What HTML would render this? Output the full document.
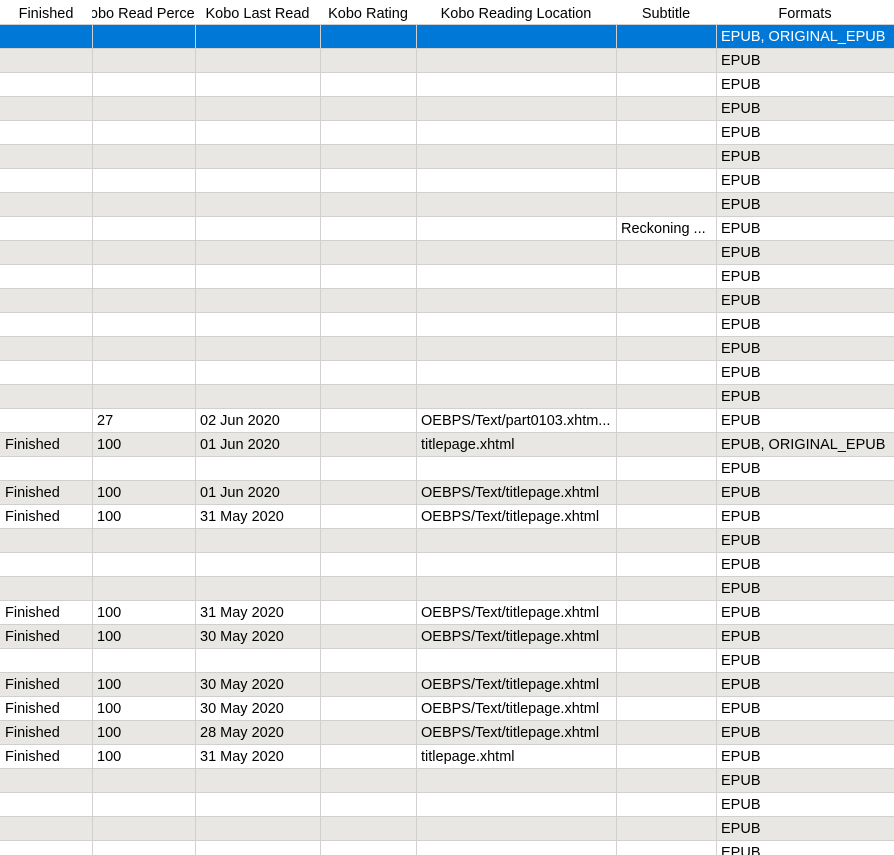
<!DOCTYPE html>
<html><head><meta charset="utf-8"><style>
html,body{margin:0;padding:0;width:894px;height:856px;overflow:hidden;background:#fff;font-family:"Liberation Sans",sans-serif;font-size:14.5px;color:#000}
.r{position:absolute;left:0;width:894px;height:24px;}
.c{position:absolute;top:0;height:23px;line-height:24px;border-right:1px solid #d0d0d0;border-bottom:1px solid #d0d0d0;padding-left:5px;box-sizing:content-box;white-space:nowrap;overflow:hidden}
.g{background:#e8e7e3}
.s{background:#0078d7;color:#fff}
.h .c{background:#fff;text-align:center;padding-left:0;display:flex;justify-content:center;border-bottom:1px solid #d0d0d0;border-right:1px solid #d8d8d8;height:24px;line-height:28px}
.c0{left:0;width:87px}.c1{left:92px;width:98px}.c2{left:195px;width:120px}.c3{left:320px;width:91px}.c4{left:416px;width:195px}.c5{left:616px;width:95px}.c6{left:716px;width:178px;border-right:none}
.h .c0{width:92px}.h .c1{width:103px}.h .c2{width:125px}.h .c3{width:96px}.h .c4{width:200px}.h .c5{width:100px}.h .c6{width:178px}
</style></head><body>
<div class="r h" style="top:0;height:25px">
<div class="c c0">Finished</div><div class="c c1"><span>Kobo Read Percent</span></div><div class="c c2">Kobo Last Read</div><div class="c c3">Kobo Rating</div><div class="c c4">Kobo Reading Location</div><div class="c c5">Subtitle</div><div class="c c6">Formats</div>
</div>
<div class="r s" style="top:25px"><div class="c c0"></div><div class="c c1"></div><div class="c c2"></div><div class="c c3"></div><div class="c c4"></div><div class="c c5"></div><div class="c c6">EPUB, ORIGINAL_EPUB</div></div>
<div class="r g" style="top:49px"><div class="c c0"></div><div class="c c1"></div><div class="c c2"></div><div class="c c3"></div><div class="c c4"></div><div class="c c5"></div><div class="c c6">EPUB</div></div>
<div class="r" style="top:73px"><div class="c c0"></div><div class="c c1"></div><div class="c c2"></div><div class="c c3"></div><div class="c c4"></div><div class="c c5"></div><div class="c c6">EPUB</div></div>
<div class="r g" style="top:97px"><div class="c c0"></div><div class="c c1"></div><div class="c c2"></div><div class="c c3"></div><div class="c c4"></div><div class="c c5"></div><div class="c c6">EPUB</div></div>
<div class="r" style="top:121px"><div class="c c0"></div><div class="c c1"></div><div class="c c2"></div><div class="c c3"></div><div class="c c4"></div><div class="c c5"></div><div class="c c6">EPUB</div></div>
<div class="r g" style="top:145px"><div class="c c0"></div><div class="c c1"></div><div class="c c2"></div><div class="c c3"></div><div class="c c4"></div><div class="c c5"></div><div class="c c6">EPUB</div></div>
<div class="r" style="top:169px"><div class="c c0"></div><div class="c c1"></div><div class="c c2"></div><div class="c c3"></div><div class="c c4"></div><div class="c c5"></div><div class="c c6">EPUB</div></div>
<div class="r g" style="top:193px"><div class="c c0"></div><div class="c c1"></div><div class="c c2"></div><div class="c c3"></div><div class="c c4"></div><div class="c c5"></div><div class="c c6">EPUB</div></div>
<div class="r" style="top:217px"><div class="c c0"></div><div class="c c1"></div><div class="c c2"></div><div class="c c3"></div><div class="c c4"></div><div class="c c5">Reckoning ...</div><div class="c c6">EPUB</div></div>
<div class="r g" style="top:241px"><div class="c c0"></div><div class="c c1"></div><div class="c c2"></div><div class="c c3"></div><div class="c c4"></div><div class="c c5"></div><div class="c c6">EPUB</div></div>
<div class="r" style="top:265px"><div class="c c0"></div><div class="c c1"></div><div class="c c2"></div><div class="c c3"></div><div class="c c4"></div><div class="c c5"></div><div class="c c6">EPUB</div></div>
<div class="r g" style="top:289px"><div class="c c0"></div><div class="c c1"></div><div class="c c2"></div><div class="c c3"></div><div class="c c4"></div><div class="c c5"></div><div class="c c6">EPUB</div></div>
<div class="r" style="top:313px"><div class="c c0"></div><div class="c c1"></div><div class="c c2"></div><div class="c c3"></div><div class="c c4"></div><div class="c c5"></div><div class="c c6">EPUB</div></div>
<div class="r g" style="top:337px"><div class="c c0"></div><div class="c c1"></div><div class="c c2"></div><div class="c c3"></div><div class="c c4"></div><div class="c c5"></div><div class="c c6">EPUB</div></div>
<div class="r" style="top:361px"><div class="c c0"></div><div class="c c1"></div><div class="c c2"></div><div class="c c3"></div><div class="c c4"></div><div class="c c5"></div><div class="c c6">EPUB</div></div>
<div class="r g" style="top:385px"><div class="c c0"></div><div class="c c1"></div><div class="c c2"></div><div class="c c3"></div><div class="c c4"></div><div class="c c5"></div><div class="c c6">EPUB</div></div>
<div class="r" style="top:409px"><div class="c c0"></div><div class="c c1">27</div><div class="c c2">02 Jun 2020</div><div class="c c3"></div><div class="c c4">OEBPS/Text/part0103.xhtm...</div><div class="c c5"></div><div class="c c6">EPUB</div></div>
<div class="r g" style="top:433px"><div class="c c0">Finished</div><div class="c c1">100</div><div class="c c2">01 Jun 2020</div><div class="c c3"></div><div class="c c4">titlepage.xhtml</div><div class="c c5"></div><div class="c c6">EPUB, ORIGINAL_EPUB</div></div>
<div class="r" style="top:457px"><div class="c c0"></div><div class="c c1"></div><div class="c c2"></div><div class="c c3"></div><div class="c c4"></div><div class="c c5"></div><div class="c c6">EPUB</div></div>
<div class="r g" style="top:481px"><div class="c c0">Finished</div><div class="c c1">100</div><div class="c c2">01 Jun 2020</div><div class="c c3"></div><div class="c c4">OEBPS/Text/titlepage.xhtml</div><div class="c c5"></div><div class="c c6">EPUB</div></div>
<div class="r" style="top:505px"><div class="c c0">Finished</div><div class="c c1">100</div><div class="c c2">31 May 2020</div><div class="c c3"></div><div class="c c4">OEBPS/Text/titlepage.xhtml</div><div class="c c5"></div><div class="c c6">EPUB</div></div>
<div class="r g" style="top:529px"><div class="c c0"></div><div class="c c1"></div><div class="c c2"></div><div class="c c3"></div><div class="c c4"></div><div class="c c5"></div><div class="c c6">EPUB</div></div>
<div class="r" style="top:553px"><div class="c c0"></div><div class="c c1"></div><div class="c c2"></div><div class="c c3"></div><div class="c c4"></div><div class="c c5"></div><div class="c c6">EPUB</div></div>
<div class="r g" style="top:577px"><div class="c c0"></div><div class="c c1"></div><div class="c c2"></div><div class="c c3"></div><div class="c c4"></div><div class="c c5"></div><div class="c c6">EPUB</div></div>
<div class="r" style="top:601px"><div class="c c0">Finished</div><div class="c c1">100</div><div class="c c2">31 May 2020</div><div class="c c3"></div><div class="c c4">OEBPS/Text/titlepage.xhtml</div><div class="c c5"></div><div class="c c6">EPUB</div></div>
<div class="r g" style="top:625px"><div class="c c0">Finished</div><div class="c c1">100</div><div class="c c2">30 May 2020</div><div class="c c3"></div><div class="c c4">OEBPS/Text/titlepage.xhtml</div><div class="c c5"></div><div class="c c6">EPUB</div></div>
<div class="r" style="top:649px"><div class="c c0"></div><div class="c c1"></div><div class="c c2"></div><div class="c c3"></div><div class="c c4"></div><div class="c c5"></div><div class="c c6">EPUB</div></div>
<div class="r g" style="top:673px"><div class="c c0">Finished</div><div class="c c1">100</div><div class="c c2">30 May 2020</div><div class="c c3"></div><div class="c c4">OEBPS/Text/titlepage.xhtml</div><div class="c c5"></div><div class="c c6">EPUB</div></div>
<div class="r" style="top:697px"><div class="c c0">Finished</div><div class="c c1">100</div><div class="c c2">30 May 2020</div><div class="c c3"></div><div class="c c4">OEBPS/Text/titlepage.xhtml</div><div class="c c5"></div><div class="c c6">EPUB</div></div>
<div class="r g" style="top:721px"><div class="c c0">Finished</div><div class="c c1">100</div><div class="c c2">28 May 2020</div><div class="c c3"></div><div class="c c4">OEBPS/Text/titlepage.xhtml</div><div class="c c5"></div><div class="c c6">EPUB</div></div>
<div class="r" style="top:745px"><div class="c c0">Finished</div><div class="c c1">100</div><div class="c c2">31 May 2020</div><div class="c c3"></div><div class="c c4">titlepage.xhtml</div><div class="c c5"></div><div class="c c6">EPUB</div></div>
<div class="r g" style="top:769px"><div class="c c0"></div><div class="c c1"></div><div class="c c2"></div><div class="c c3"></div><div class="c c4"></div><div class="c c5"></div><div class="c c6">EPUB</div></div>
<div class="r" style="top:793px"><div class="c c0"></div><div class="c c1"></div><div class="c c2"></div><div class="c c3"></div><div class="c c4"></div><div class="c c5"></div><div class="c c6">EPUB</div></div>
<div class="r g" style="top:817px"><div class="c c0"></div><div class="c c1"></div><div class="c c2"></div><div class="c c3"></div><div class="c c4"></div><div class="c c5"></div><div class="c c6">EPUB</div></div>
<div class="r" style="top:841px;height:14px;overflow:hidden"><div class="c c0"></div><div class="c c1"></div><div class="c c2"></div><div class="c c3"></div><div class="c c4"></div><div class="c c5"></div><div class="c c6">EPUB</div></div>
<div style="position:absolute;left:0;top:855px;width:894px;height:1px;background:#d0d0d0"></div>
</body></html>
